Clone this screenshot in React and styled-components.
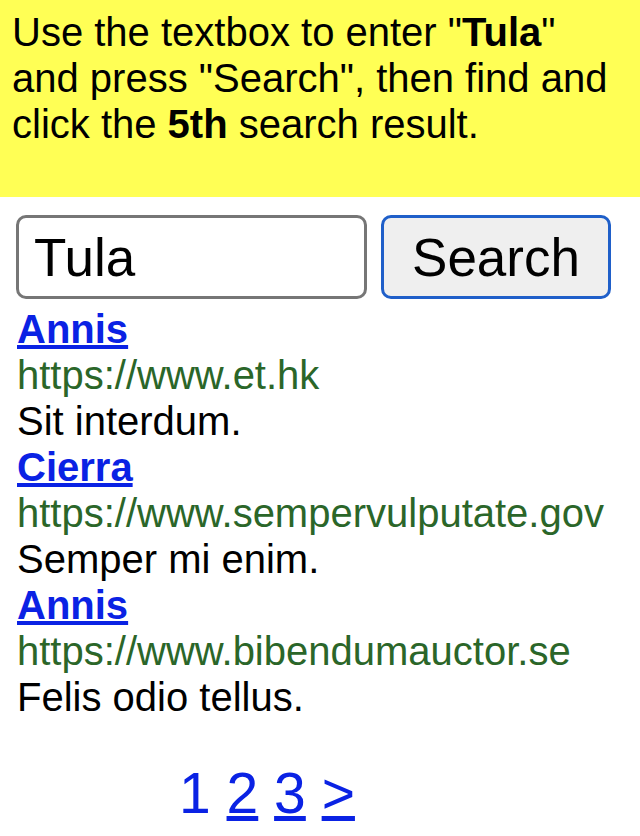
import styled, { createGlobalStyle } from "styled-components";

const GlobalStyle = createGlobalStyle`
  body {
    margin: 0;
    background: #ffffff;
    font-family: "Liberation Sans", Arial, sans-serif;
  }
`;

const Page = styled.div`
  width: 640px;
`;

const Query = styled.div`
  box-sizing: border-box;
  height: 197px;
  padding: 9px 12px 0;
  background-color: #ffff55;
  font-size: 40px;
  line-height: 46px;
  color: #000;
`;

const Strong = styled.b`
  font-weight: bold;
`;

const SearchRow = styled.div`
  display: flex;
  gap: 14px;
  margin-top: 18px;
  padding: 0 16px;
`;

const SearchInput = styled.input`
  box-sizing: border-box;
  width: 351px;
  height: 84px;
  padding: 0 15px;
  border: 3px solid #767676;
  border-radius: 10px;
  font-family: "Liberation Sans", Arial, sans-serif;
  font-size: 53px;
  color: #000;
  outline: none;
`;

const SearchButton = styled.button`
  box-sizing: border-box;
  width: 230px;
  height: 84px;
  padding: 0;
  border: 3px solid #1f5fc9;
  border-radius: 10px;
  background-color: #efefef;
  font-family: "Liberation Sans", Arial, sans-serif;
  font-size: 53px;
  color: #000;
`;

const Results = styled.div`
  margin-top: 7px;
  padding-left: 17px;
  font-size: 40px;
  line-height: 46px;
`;

const Result = styled.div``;

const Title = styled.a`
  display: block;
  width: max-content;
  color: #0a22e4;
  font-weight: bold;
  text-decoration: underline;
`;

const Url = styled.div`
  color: #2b6629;
`;

const Snippet = styled.div`
  color: #000;
`;

const Pagination = styled.div`
  margin-top: 40px;
  padding-left: 179px;
  font-size: 57px;
  color: #0a22e4;
`;

const PageLink = styled.a`
  color: #0a22e4;
  text-decoration: ${(p) => (p.$current ? "none" : "underline")};
`;

const results = [
  { title: "Annis", url: "https://www.et.hk", text: "Sit interdum." },
  { title: "Cierra", url: "https://www.sempervulputate.gov", text: "Semper mi enim." },
  { title: "Annis", url: "https://www.bibendumauctor.se", text: "Felis odio tellus." },
];

export default function App() {
  return (
    <Page>
      <GlobalStyle />
      <Query>
        Use the textbox to enter "<Strong>Tula</Strong>" and press "Search", then
        find and click the <Strong>5th</Strong> search result.
      </Query>
      <SearchRow>
        <SearchInput defaultValue="Tula" />
        <SearchButton>Search</SearchButton>
      </SearchRow>
      <Results>
        {results.map((r, i) => (
          <Result key={i}>
            <Title href="#">{r.title}</Title>
            <Url>{r.url}</Url>
            <Snippet>{r.text}</Snippet>
          </Result>
        ))}
      </Results>
      <Pagination>
        <PageLink $current>1</PageLink> <PageLink href="#">2</PageLink>{" "}
        <PageLink href="#">3</PageLink> <PageLink href="#">&gt;</PageLink>
      </Pagination>
    </Page>
  );
}
